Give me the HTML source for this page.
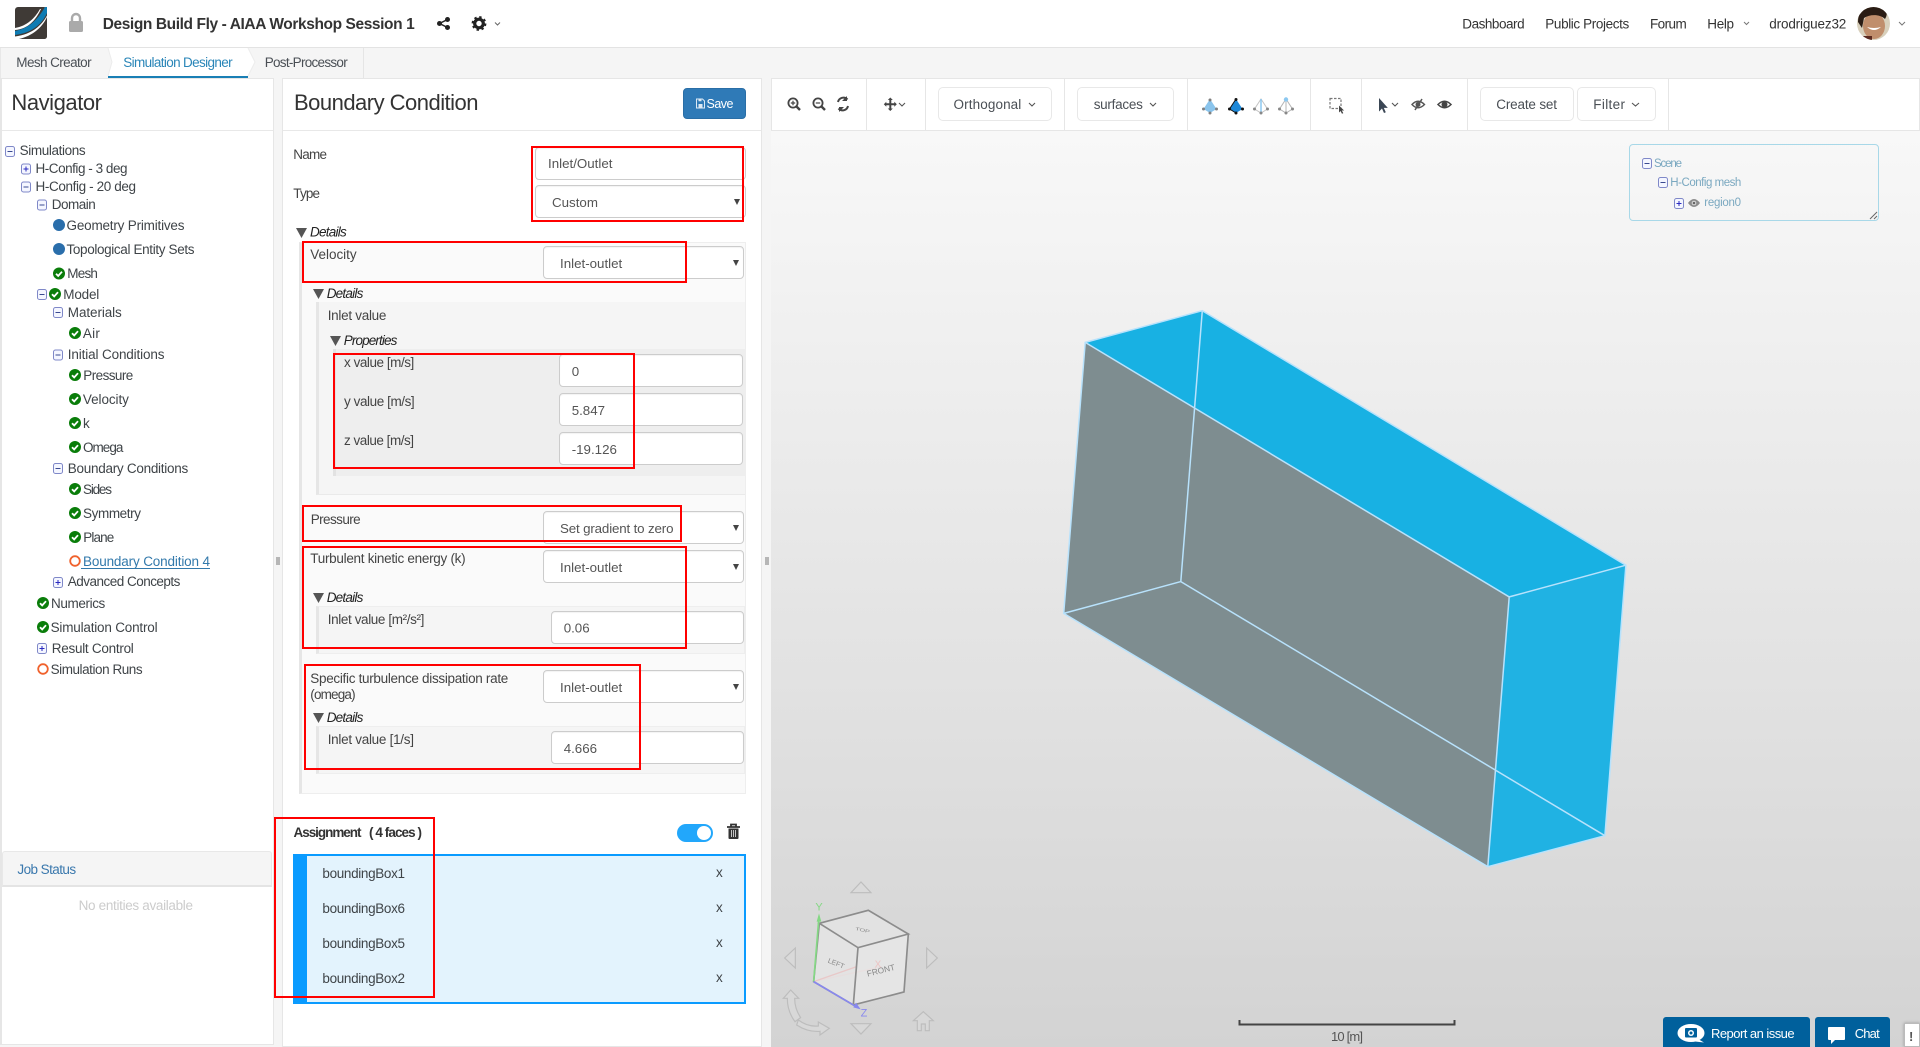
<!DOCTYPE html>
<html><head><meta charset="utf-8"><title>Boundary Condition</title>
<style>
html,body{margin:0;padding:0;width:1920px;height:1047px;overflow:hidden;background:#f5f5f5;font-family:"Liberation Sans",sans-serif}
.b{position:absolute;box-sizing:border-box}
.inp{background:#fff;border:1px solid #ccc;border-radius:4px;box-shadow:inset 0 1px 1px rgba(0,0,0,.05)}
.red{position:absolute;box-sizing:border-box;border:2px solid #f00;z-index:9}
svg{position:absolute;overflow:visible}
text{font-family:"Liberation Sans",sans-serif}
.n{font-size:13.5px;fill:#3f4448}
.l{font-size:13.5px;fill:#444}
.i{font-size:13.5px;fill:#222;font-style:italic}
.v{font-size:13.33px;fill:#555}
.h{font-size:22px;fill:#333}
.tb{font-size:13.5px;fill:#4a4f55}
.sc{font-size:11.5px;fill:#7aa8c0}
</style></head><body>

<!-- header -->
<div class="b" style="left:0;top:0;width:1920px;height:48px;background:#fff;border-bottom:1px solid #e3e3e3"></div>
<!-- tab bar -->
<div class="b" style="left:0;top:48px;width:364px;height:30px;border-right:1px solid #e5e5e5;border-left:1px solid #e8e8e8"></div>
<svg style="left:0;top:0" width="400" height="80">
<polygon points="108,48 248,48 255,62 248,76 108,76 112,62" fill="#fff"/>
<polyline points="108,48 112,62 108,76" fill="none" stroke="#ececec"/>
<polyline points="248,48 255,62 248,76" fill="none" stroke="#ececec"/>
<rect x="108" y="76" width="140" height="2" fill="#1a7fb5"/>
</svg>

<!-- navigator panel -->
<div class="b" style="left:0;top:78px;width:274px;height:967px;background:#fff;border:1px solid #e6e6e6;border-left:2px solid #e6e6e6"></div>
<div class="b" style="left:2px;top:130px;width:271px;height:1px;background:#e8e8e8"></div>
<div class="b" style="left:2px;top:851px;width:270px;height:36px;background:#f5f5f5;border:1px solid #e8e8e8;border-bottom:2px solid #e4e4e4;border-radius:3px 3px 0 0"></div>

<!-- middle panel -->
<div class="b" style="left:282px;top:78px;width:480px;height:969px;background:#fff;border:1px solid #e6e6e6"></div>
<div class="b" style="left:283px;top:130px;width:478px;height:1px;background:#e8e8e8"></div>
<div class="b" style="left:683px;top:88px;width:63px;height:31px;background:#2f7ab7;border:1px solid #2a6ea6;border-radius:4px"></div>

<!-- nested containers -->
<div class="b" style="left:299px;top:242px;width:447px;height:552px;background:#fafafa;border:1px solid #eee;border-left:3px solid #e6e6e6"></div>
<div class="b" style="left:316px;top:302px;width:429px;height:193px;background:#f5f5f5;border-bottom:1px solid #eaeaea;border-left:3px solid #e6e6e6"></div>
<div class="b" style="left:333px;top:349px;width:412px;height:127px;background:#eee;border-left:3px solid #e2e2e2"></div>
<div class="b" style="left:316px;top:606px;width:429px;height:48px;background:#f5f5f5;border:1px solid #eee;border-left:3px solid #e6e6e6"></div>
<div class="b" style="left:316px;top:726px;width:429px;height:48px;background:#f5f5f5;border:1px solid #eee;border-left:3px solid #e6e6e6"></div>

<!-- inputs -->
<div class="b inp" style="left:535px;top:147px;width:211px;height:33px"></div>
<div class="b inp" style="left:535px;top:185px;width:211px;height:33px"></div>
<div class="b inp" style="left:543px;top:246px;width:201px;height:33px"></div>
<div class="b inp" style="left:559px;top:354px;width:184px;height:33px"></div>
<div class="b inp" style="left:559px;top:393px;width:184px;height:33px"></div>
<div class="b inp" style="left:559px;top:432px;width:184px;height:33px"></div>
<div class="b inp" style="left:543px;top:511px;width:201px;height:33px"></div>
<div class="b inp" style="left:543px;top:550px;width:201px;height:33px"></div>
<div class="b inp" style="left:551px;top:611px;width:193px;height:33px"></div>
<div class="b inp" style="left:543px;top:670px;width:201px;height:33px"></div>
<div class="b inp" style="left:551px;top:731px;width:193px;height:33px"></div>

<!-- assignment list -->
<div class="b" style="left:293px;top:854px;width:453px;height:150px;background:#e3f3fd;border:2px solid #0a9bff;border-left:14px solid #0a9bff"></div>
<div class="b" style="left:677px;top:824px;width:36px;height:18px;background:#22a7fb;border-radius:9px"></div>
<div class="b" style="left:697px;top:826px;width:14px;height:14px;background:#fff;border-radius:50%"></div>

<!-- canvas -->
<div class="b" style="left:771px;top:130px;width:1149px;height:917px;background:linear-gradient(#f8f8f8,#d3d3d3)"></div>
<!-- toolbar -->
<div class="b" style="left:771px;top:78px;width:1149px;height:53px;background:#fff;border:1px solid #e6e6e6"></div>
<div class="b" style="left:866px;top:78px;width:1px;height:52px;background:#e6e6e6"></div>
<div class="b" style="left:925px;top:78px;width:1px;height:52px;background:#e6e6e6"></div>
<div class="b" style="left:1064px;top:78px;width:1px;height:52px;background:#e6e6e6"></div>
<div class="b" style="left:1187px;top:78px;width:1px;height:52px;background:#e6e6e6"></div>
<div class="b" style="left:1310px;top:78px;width:1px;height:52px;background:#e6e6e6"></div>
<div class="b" style="left:1361px;top:78px;width:1px;height:52px;background:#e6e6e6"></div>
<div class="b" style="left:1467px;top:78px;width:1px;height:52px;background:#e6e6e6"></div>
<div class="b" style="left:1668px;top:78px;width:1px;height:52px;background:#e6e6e6"></div>
<div class="b" style="left:938px;top:87px;width:114px;height:34px;border:1px solid #e8e8e8;border-radius:5px"></div>
<div class="b" style="left:1077px;top:87px;width:97px;height:34px;border:1px solid #e8e8e8;border-radius:5px"></div>
<div class="b" style="left:1480px;top:87px;width:94px;height:34px;border:1px solid #e8e8e8;border-radius:5px"></div>
<div class="b" style="left:1577px;top:87px;width:79px;height:34px;border:1px solid #e8e8e8;border-radius:5px"></div>

<!-- scene tree box -->
<div class="b" style="left:1629px;top:144px;width:250px;height:77px;border:1px solid #a8d8e8;border-radius:4px"></div>

<!-- report / chat -->
<div class="b" style="left:1663px;top:1017px;width:147px;height:30px;background:#00609c;border-radius:3px 3px 0 0"></div>
<div class="b" style="left:1815px;top:1017px;width:75px;height:30px;background:#00609c;border-radius:3px 3px 0 0"></div>
<div class="b" style="left:1904px;top:1023px;width:16px;height:24px;background:#fff;border:1px solid #bbb;box-shadow:0 0 3px #999"></div>

<!-- 3D box, icons and all text -->
<svg style="left:0;top:0" width="1920" height="1047" viewBox="0 0 1920 1047">
<defs>
<symbol id="m" viewBox="0 0 10 11" width="10" height="11"><rect x=".5" y=".5" width="9" height="10" rx="2" fill="#f4f6ff" stroke="#7f88c8"/><path d="M2.500 5.500h5" stroke="#3a4a90"/></symbol>
<symbol id="p" viewBox="0 0 10 11" width="10" height="11"><rect x=".5" y=".5" width="9" height="10" rx="2" fill="#f4f6ff" stroke="#7f88c8"/><path d="M2.500 5.500h5M5 3v5" stroke="#2a2ac0"/></symbol>
<symbol id="c" viewBox="0 0 12 12" width="12" height="12"><circle cx="6" cy="6" r="6" fill="#0a7d0a"/><path d="M3 6.200l2.200 2.200L9 4.200" fill="none" stroke="#fff" stroke-width="1.800"/></symbol>
<symbol id="d" viewBox="0 0 12 12" width="12" height="12"><circle cx="6" cy="6" r="6" fill="#2a6eab"/></symbol>
<symbol id="o" viewBox="0 0 12 12" width="12" height="12"><circle cx="6" cy="6" r="4.800" fill="#fff" stroke="#f0622d" stroke-width="1.800"/></symbol>
<symbol id="t" viewBox="0 0 11 10" width="11" height="10"><polygon points="0,0 11,0 5.500,10" fill="#555"/></symbol>
<symbol id="a" viewBox="0 0 6 6" width="6" height="6"><polygon points="0,0 6,0 3,6" fill="#444"/></symbol>
</defs>

<!-- box -->
<polygon points="1085.200,342.400 1202.300,310.700 1625.900,565.200 1509.200,596.900" fill="#18b1e3"/>
<polygon points="1509.200,596.900 1625.900,565.200 1604.900,835.700 1487.800,866.700" fill="#20b2e3"/>
<polygon points="1085.200,342.400 1509.200,596.900 1487.800,866.700 1063.700,613.400" fill="#7e8d90"/>
<g fill="none" stroke="#b8e2fc" stroke-width="1.500">
<polygon points="1085.200,342.400 1202.300,310.700 1625.900,565.200 1604.900,835.700 1487.800,866.700 1063.700,613.400"/>
<path d="M1085.200 342.400L1509.200 596.900L1625.900 565.200M1509.200 596.900L1487.800 866.700M1202.300 310.700L1180.800 581.600L1063.700 613.400M1180.800 581.600L1604.900 835.700"/>
</g>

<!-- logo -->
<g transform="translate(15,7)">
<rect width="32" height="32" rx="3" fill="#3f3a36"/>
<path d="M0 21C12 19 20 11 25 2L26 2C21 13 13 22 0 23Z" fill="#fff"/>
<path d="M0 24C15 21 23 12 30 0L32 0L32 6C27 17 17 26 0 28Z" fill="#0f7cb3"/>
<path d="M0 29.500C17 27.500 27 18 32 8.500L32 10C27 21 17 29 4 32L0 32Z" fill="#fff"/>
<path d="M9 32C20 28 28 21 32 13L32 29Q32 32 29 32Z" fill="#3f3a36"/>
</g>
<!-- lock -->
<rect x="69" y="21" width="14" height="11" rx="1.500" fill="#aaa"/>
<path d="M72 21v-3a4 4 0 0 1 8 0v3" fill="none" stroke="#aaa" stroke-width="2.400"/>
<!-- share -->
<g fill="#222"><circle cx="447.500" cy="19.500" r="2.500"/><circle cx="447.500" cy="27.500" r="2.500"/><circle cx="439.500" cy="23.500" r="2.500"/></g>
<path d="M447.500 19.500L439.500 23.500L447.500 27.500" fill="none" stroke="#222" stroke-width="1.500"/>
<!-- gear -->
<circle cx="479" cy="23.500" r="4.300" fill="none" stroke="#222" stroke-width="3.200"/>
<circle cx="479" cy="23.500" r="6.400" fill="none" stroke="#222" stroke-width="2" stroke-dasharray="2.400 2.630"/>
<path d="M495 22.500l2.500 2.500l2.500-2.500" fill="none" stroke="#666"/>
<path d="M1744 22l2.500 2.500l2.500-2.500" fill="none" stroke="#777"/>
<path d="M1899 22l3 3l3-3" fill="none" stroke="#777"/>
<!-- avatar -->
<clipPath id="av"><circle cx="1873.500" cy="23.500" r="16.500"/></clipPath>
<g clip-path="url(#av)">
<rect x="1857" y="7" width="33" height="33" fill="#d8d0bc"/>
<ellipse cx="1874" cy="26" rx="11" ry="13" fill="#c08e6c"/>
<path d="M1858 22C1858 8 1868 5 1876 5C1886 6 1889 13 1885 19C1880 14 1870 14 1864 18L1862 28Z" fill="#2a1c14"/>
<path d="M1867 27q7 6 14 0q-7 2-14 0Z" fill="#fff"/>
<rect x="1857" y="36" width="15" height="5" fill="#5a2a20"/>
</g>

<!-- tree icons -->
<use href="#m" x="5" y="146"/><use href="#p" x="21" y="163.500"/><use href="#m" x="21" y="181.500"/><use href="#m" x="37" y="199.500"/>
<use href="#d" x="53" y="219"/><use href="#d" x="53" y="243"/><use href="#c" x="53" y="267.500"/>
<use href="#m" x="37" y="289"/><use href="#c" x="49" y="288"/>
<use href="#m" x="53" y="307"/><use href="#c" x="69" y="327"/>
<use href="#m" x="53" y="349.500"/>
<use href="#c" x="69" y="369"/><use href="#c" x="69" y="393"/><use href="#c" x="69" y="417"/><use href="#c" x="69" y="441"/>
<use href="#m" x="53" y="463"/>
<use href="#c" x="69" y="483"/><use href="#c" x="69" y="507"/><use href="#c" x="69" y="531"/><use href="#o" x="69" y="555"/>
<use href="#p" x="53" y="577"/>
<use href="#c" x="37" y="597"/><use href="#c" x="37" y="621"/><use href="#p" x="37" y="643"/><use href="#o" x="37" y="663"/>

<!-- splitters -->
<path d="M277 557v8M279 557v8M766 557v8M768 557v8" stroke="#777"/>

<!-- form triangles and arrows -->
<use href="#t" x="296" y="228"/><use href="#t" x="313" y="289"/><use href="#t" x="330" y="336"/><use href="#t" x="313" y="593"/><use href="#t" x="313" y="713"/>
<use href="#a" x="734" y="199"/><use href="#a" x="733" y="260"/><use href="#a" x="733" y="525"/><use href="#a" x="733" y="564"/><use href="#a" x="733" y="684"/>

<!-- floppy -->
<path d="M696.500 99h6l2 2v7h-8z" fill="none" stroke="#dce9f4" stroke-width="1"/><path d="M698.500 104h4v4h-4zM698.500 99.500h3v1.800h-3z" fill="#dce9f4"/>

<!-- trash -->
<path d="M727 827h13M731 827v-2.500h5v2.500" fill="none" stroke="#333" stroke-width="1.800"/>
<path d="M728.500 828.500h10v9.500q0 1-1 1h-8q-1 0-1-1z" fill="#333"/>
<path d="M731.500 830v7M733.500 830v7M735.500 830v7" stroke="#e8e8e8" stroke-width=".8"/>

<!-- toolbar icons -->
<g fill="none" stroke="#444" stroke-width="1.800">
<circle cx="793" cy="103" r="4.600"/><path d="M796.500 106.500l3.500 3.500" stroke-width="2.400"/><path d="M790.800 103h4.400M793 100.800v4.400" stroke-width="1.200"/>
<circle cx="818" cy="103" r="4.600"/><path d="M821.500 106.500l3.500 3.500" stroke-width="2.400"/><path d="M815.800 103h4.400" stroke-width="1.200"/>
<path d="M838 102a5.500 5.500 0 0 1 9.500-2.500M848 106a5.500 5.500 0 0 1-9.500 2.500" stroke-width="2"/>
</g>
<path d="M847 96v5h-5zM839 112v-5h5z" fill="#444"/>
<path d="M890.300 99v10.500M885 104.300h10.500" stroke="#444" stroke-width="2"/>
<path d="M890.300 97.500l-2.500 2.500h5zM890.300 111l-2.500-2.500h5zM883.800 104.300l2.500-2.500v5zM896.800 104.300l-2.500-2.500v5z" fill="#444"/>
<path d="M899 103l3 3l3-3M1029 103l3 3l3-3M1150 103l3 3l3-3M1632 103l3.500 3l3.500-3M1392 103l3 3l3-3" fill="none" stroke="#555" stroke-width="1.100"/>

<!-- tetra icons -->
<g stroke-width="1">
<polygon points="1210,99 1203.500,109 1210,113 1216.500,109" fill="#8ac4ec"/>
<g fill="#808080"><circle cx="1210" cy="100" r="1.500"/><circle cx="1203.500" cy="109" r="1.500"/><circle cx="1210" cy="113" r="1.500"/><circle cx="1216.500" cy="109" r="1.500"/></g>
<polygon points="1236,99 1229.500,109 1236,113 1242.500,109" fill="#1e88d8"/>
<path d="M1236 99L1229.500 109L1236 113" fill="none" stroke="#111"/>
<g fill="#111"><circle cx="1236" cy="99.500" r="1.500"/><circle cx="1229.500" cy="109" r="1.500"/><circle cx="1236" cy="113" r="1.500"/><circle cx="1242.500" cy="109" r="1.500"/></g>
<path d="M1261 99l-6.500 10l6.500 4l6.500-4z" fill="none" stroke="#c4c4c4"/><path d="M1261 99v14" stroke="#8cc8f0" stroke-width="1.500"/>
<g fill="#888"><circle cx="1254.500" cy="109" r="1.500"/><circle cx="1261" cy="113" r="1.500"/><circle cx="1267.500" cy="109" r="1.500"/></g>
<path d="M1286 99l-6.500 10l6.500 4l6.500-4zM1286 99v14" fill="none" stroke="#b4b4b4"/>
<circle cx="1286" cy="99.500" r="2.200" fill="#8cc8f0"/>
<g fill="#888"><circle cx="1279.500" cy="109" r="1.500"/><circle cx="1286" cy="113" r="1.500"/><circle cx="1292.500" cy="109" r="1.500"/></g>
</g>
<!-- select rectangle -->
<rect x="1330" y="98.500" width="11" height="10" fill="none" stroke="#777" stroke-width="1.200" stroke-dasharray="2.500 1.500"/>
<path d="M1339 105.500v7l1.500-1.500l1.500 2.800l1.300-.7l-1.500-2.600h2.300z" fill="#444"/>
<!-- pointer -->
<path d="M1379 98v13.500l3-3l2 4.500l1.800-.8l-2-4.300h4z" fill="#3a4654"/>
<!-- eye slash -->
<path d="M1412 104.500q6-6.500 12.500 0q-6.500 6.500-12.500 0z" fill="none" stroke="#555" stroke-width="1.400"/>
<circle cx="1418" cy="104.500" r="2.500" fill="#555"/><path d="M1422 99l-7 11" stroke="#555" stroke-width="1.500"/>
<!-- eye -->
<path d="M1438 104.500q6.500-6.500 13 0q-6.500 6.500-13 0z" fill="none" stroke="#444" stroke-width="1.500"/>
<circle cx="1444.500" cy="104.500" r="3" fill="#444"/>

<!-- scene tree icons -->
<use href="#m" x="1642" y="158"/><use href="#m" x="1658" y="177"/><use href="#p" x="1674" y="198"/>
<path d="M1688 203q6-8 12 0q-6 8-12 0z" fill="#8c8c8c"/><circle cx="1694" cy="203" r="2.300" fill="#ddd"/><circle cx="1694" cy="203" r="1.300" fill="#666"/>
<path d="M1870 219l7-7M1874 219l3-3" stroke="#666"/>

<!-- cube -->
<g transform="translate(770,870) scale(.3333)">
<g fill="#dcdcdc" fill-opacity=".5" stroke="#bdbdbd" stroke-width="3.500">
<polygon points="243,68 273,36 303,68"/><polygon points="243,461 303,461 273,492"/>
<polygon points="76,234 44,264 76,294"/><polygon points="470,234 502,264 470,294"/>
<path d="M430 452L460 425L490 452L478 452L478 482L466 482L466 462L454 462L454 482L442 482L442 452Z"/>
<path d="M62 360L40 385L52 385C52 410 60 435 75 455L92 443C80 425 74 405 74 385L86 385Z"/>
<path d="M85 450C105 465 125 470 145 468L145 456L178 475L150 495L150 484C125 486 100 478 80 465Z"/>
</g>
<path d="M131 335L335 290" stroke="#e8bcbc" stroke-width="4"/>
<polygon points="148,160 295,121 415,192 264,233" fill="#e4e4e4" fill-opacity=".85"/>
<polygon points="148,160 264,233 250,405 131,335" fill="#e6e6e6" fill-opacity=".8"/>
<polygon points="264,233 415,192 402,366 250,405" fill="#e8e8e8" fill-opacity=".8"/>
<path d="M131 335L260 290" stroke="#e8c8c8" stroke-width="4"/>
<g fill="none" stroke="#8c8c8c" stroke-width="5">
<polygon points="148,160 295,121 415,192 264,233"/><path d="M148 160L131 335L250 405L264 233M250 405L402 366L415 192"/>
</g>
<path d="M131 335L147 140" stroke="#84d884" stroke-width="5"/><polygon points="147,130 140,155 154,155" fill="#84d884"/>
<path d="M131 335L262 412" stroke="#8888ee" stroke-width="5"/><polygon points="272,418 250,412 258,398" fill="#8888ee"/>
<text x="136" y="122" font-size="33" style="fill:#84d884">Y</text>
<text x="272" y="440" font-size="33" style="fill:#8888ee">Z</text>
<text x="314" y="293" font-size="30" style="fill:#ecc4c4">X</text>
<text transform="translate(255,180) rotate(12) scale(1,.6)" font-size="22" style="fill:#888">TOP</text>
<text transform="translate(172,277) rotate(22)" font-size="21" style="fill:#888">LEFT</text>
<text transform="translate(293,320) rotate(-14)" font-size="25" style="fill:#888">FRONT</text>
</g>

<!-- scale bar -->
<path d="M1239.500 1020v4.500h215v-4.500" fill="none" stroke="#444" stroke-width="2"/>

<!-- report icon -->
<ellipse cx="1691" cy="1033" rx="13.500" ry="9" fill="#fff"/><path d="M1698 1039l6 3.500l-9-1z" fill="#fff"/>
<rect x="1685" y="1028" width="12" height="9.500" rx="1" fill="#00609c"/><circle cx="1691" cy="1033" r="3" fill="#fff"/><circle cx="1691" cy="1033" r="1.500" fill="#00609c"/>
<path d="M1829 1027h15q1 0 1 1v11q0 1-1 1h-9l-4 4v-4h-2q-1 0-1-1v-11q0-1 1-1z" fill="#fff"/>

<!-- header text -->
<text x="102.700" y="29" font-size="15.500" font-weight="700" textLength="312" style="fill:#333">Design Build Fly - AIAA Workshop Session 1</text>
<text class="tb" x="16.300" y="67" textLength="75.300">Mesh Creator</text>
<text class="tb" x="123.300" y="67" textLength="109.300" style="fill:#2a86b8">Simulation Designer</text>
<text class="tb" x="264.700" y="67" textLength="83">Post-Processor</text>
<text class="tb" x="1462.300" y="28.500" textLength="62.300" style="fill:#333">Dashboard</text>
<text class="tb" x="1545.300" y="28.500" textLength="84" style="fill:#333">Public Projects</text>
<text class="tb" x="1650" y="28.500" textLength="36.700" style="fill:#333">Forum</text>
<text class="tb" x="1707.300" y="28.500" textLength="26.700" style="fill:#333">Help</text>
<text class="tb" x="1769.300" y="28.500" textLength="77" style="fill:#333">drodriguez32</text>

<!-- navigator -->
<text class="h" x="11.400" y="110" textLength="90.600">Navigator</text>
<text class="n" x="19.600" y="155" textLength="66">Simulations</text>
<text class="n" x="35.500" y="173" textLength="92">H-Config - 3 deg</text>
<text class="n" x="35.500" y="191" textLength="100.500">H-Config - 20 deg</text>
<text class="n" x="51.800" y="209" textLength="44">Domain</text>
<text class="n" x="66.500" y="230" textLength="118">Geometry Primitives</text>
<text class="n" x="66.500" y="254" textLength="128">Topological Entity Sets</text>
<text class="n" x="67.300" y="278" textLength="30.600">Mesh</text>
<text class="n" x="63.300" y="299" textLength="36">Model</text>
<text class="n" x="67.800" y="317" textLength="54">Materials</text>
<text class="n" x="82.900" y="338" textLength="17">Air</text>
<text class="n" x="67.800" y="359" textLength="96.700">Initial Conditions</text>
<text class="n" x="83.300" y="380" textLength="50">Pressure</text>
<text class="n" x="82.900" y="404" textLength="46">Velocity</text>
<text class="n" x="83" y="428" textLength="6">k</text>
<text class="n" x="83" y="452" textLength="40.400">Omega</text>
<text class="n" x="67.800" y="473" textLength="120.400">Boundary Conditions</text>
<text class="n" x="83" y="494" textLength="29">Sides</text>
<text class="n" x="83" y="518" textLength="58">Symmetry</text>
<text class="n" x="83.300" y="542" textLength="31">Plane</text>
<text class="n" x="83" y="566" textLength="127" style="fill:#3279ab">Boundary Condition 4</text>
<path d="M81 568.500H210" stroke="#3279ab"/>
<text class="n" x="67.800" y="586" textLength="112.600">Advanced Concepts</text>
<text class="n" x="51" y="608" textLength="54.300">Numerics</text>
<text class="n" x="50.600" y="632" textLength="107">Simulation Control</text>
<text class="n" x="51.800" y="653" textLength="82">Result Control</text>
<text class="n" x="50.600" y="674" textLength="92">Simulation Runs</text>
<text class="n" x="17.400" y="874" textLength="58.700" style="fill:#3a78ad">Job Status</text>
<text class="n" x="78.600" y="910" textLength="114.400" style="fill:#ccc">No entities available</text>

<!-- boundary condition form -->
<text class="h" x="294" y="110" textLength="184.500">Boundary Condition</text>
<text x="706.500" y="108" font-size="12.500" textLength="27" style="fill:#fff">Save</text>
<text class="l" x="293.300" y="159" textLength="33.700">Name</text>
<text class="l" x="293.300" y="198" textLength="26.700">Type</text>
<text class="v" x="548" y="168">Inlet/Outlet</text>
<text class="v" x="552" y="207">Custom</text>
<text class="i" x="310" y="236.500" textLength="36.700">Details</text>
<text class="l" x="310.300" y="259" textLength="46.300">Velocity</text>
<text class="v" x="560" y="268">Inlet-outlet</text>
<text class="i" x="326.700" y="298" textLength="36.700">Details</text>
<text class="l" x="327.700" y="320" textLength="58.700">Inlet value</text>
<text class="i" x="343.700" y="345" textLength="53.700">Properties</text>
<text class="l" x="344" y="367" textLength="70.300">x value [m/s]</text>
<text class="l" x="344" y="406" textLength="70.700">y value [m/s]</text>
<text class="l" x="344" y="445" textLength="70">z value [m/s]</text>
<text class="v" x="571.700" y="376">0</text>
<text class="v" x="571.700" y="415">5.847</text>
<text class="v" x="571.700" y="454">-19.126</text>
<text class="l" x="310.700" y="524" textLength="50">Pressure</text>
<text class="v" x="560" y="533" textLength="113.500">Set gradient to zero</text>
<text class="l" x="310.300" y="563" textLength="155.300">Turbulent kinetic energy (k)</text>
<text class="v" x="560" y="572">Inlet-outlet</text>
<text class="i" x="326.700" y="602" textLength="36.700">Details</text>
<text class="l" x="327.700" y="624" textLength="96.700">Inlet value [m²/s²]</text>
<text class="v" x="563.700" y="632.500">0.06</text>
<text class="l" x="310.300" y="683" textLength="198">Specific turbulence dissipation rate</text>
<text class="l" x="310.300" y="699" textLength="45.300">(omega)</text>
<text class="v" x="560" y="692">Inlet-outlet</text>
<text class="i" x="326.700" y="722" textLength="36.700">Details</text>
<text class="l" x="327.700" y="744" textLength="86.300">Inlet value [1/s]</text>
<text class="v" x="563.700" y="753">4.666</text>
<text x="293.500" y="837" font-size="13.500" font-weight="700" textLength="68" style="fill:#333">Assignment</text>
<text x="369" y="837" font-size="13.500" font-weight="700" textLength="53" style="fill:#333">( 4 faces )</text>
<text class="n" x="322.400" y="878" textLength="82.600">boundingBox1</text>
<text class="n" x="322.400" y="913" textLength="82.600">boundingBox6</text>
<text class="n" x="322.400" y="948" textLength="82.600">boundingBox5</text>
<text class="n" x="322.400" y="983" textLength="82.600">boundingBox2</text>
<text class="n" x="716" y="877">x</text><text class="n" x="716" y="912">x</text><text class="n" x="716" y="947">x</text><text class="n" x="716" y="982">x</text>

<!-- toolbar text -->
<text class="tb" x="953.500" y="109" textLength="67.800">Orthogonal</text>
<text class="tb" x="1093.700" y="109" textLength="49.200">surfaces</text>
<text class="tb" x="1496.300" y="109" textLength="60.700">Create set</text>
<text class="tb" x="1593.300" y="109" textLength="31.700">Filter</text>
<text class="sc" x="1654" y="167" textLength="28">Scene</text>
<text class="sc" x="1670.300" y="186" textLength="71">H-Config mesh</text>
<text class="sc" x="1704.300" y="206" textLength="36.700">region0</text>
<text x="1331" y="1041" font-size="13" textLength="32" style="fill:#555">10 [m]</text>
<text x="1711" y="1038" font-size="13" textLength="83.600" style="fill:#fff">Report an issue</text>
<text x="1854.700" y="1038" font-size="13" textLength="25" style="fill:#fff">Chat</text>
<text x="1909" y="1041" font-size="13" font-weight="700" style="fill:#555">!</text>
</svg>

<!-- red annotation boxes -->
<div class="red" style="left:531px;top:146px;width:213px;height:76px"></div>
<div class="red" style="left:302px;top:241px;width:385px;height:42px"></div>
<div class="red" style="left:333px;top:353px;width:302px;height:116px"></div>
<div class="red" style="left:302px;top:505px;width:380px;height:37px"></div>
<div class="red" style="left:302px;top:546px;width:385px;height:103px"></div>
<div class="red" style="left:304px;top:664px;width:337px;height:106px"></div>
<div class="red" style="left:274px;top:817px;width:161px;height:181px"></div>
</body></html>
